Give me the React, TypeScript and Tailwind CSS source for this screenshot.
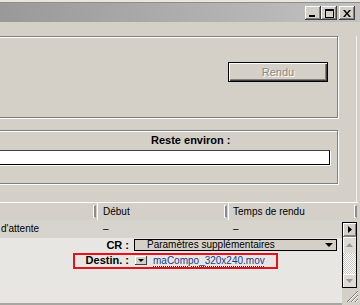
import type { ReactNode } from 'react';

function TitleButton({ children }: { children: ReactNode }) {
  return (
    <div className="flex h-[14px] w-[16px] items-center justify-center bg-[#d4d0c8] shadow-[inset_-1px_-1px_#404040,inset_1px_1px_#ffffff,inset_-2px_-2px_#808080]">
      {children}
    </div>
  );
}

function HeaderCell({ label, className }: { label: string; className: string }) {
  return (
    <div className={`flex h-full items-center border-t border-t-[#ffffff] bg-[#d4d0c8] ${className}`}>
      <span className="flex-1 truncate">{label}</span>
      {/* little ] grip at the end of each column */}
      <span className="mr-[1px] h-[13px] w-[3px] border-y border-r-2 border-l border-y-[#ffffff] border-r-[#8c8c8c] border-l-[#ffffff]" />
    </div>
  );
}

export default function App() {
  return (
    <div className="relative flex h-[305px] w-[360px] flex-col overflow-hidden bg-[#d4d0c8] font-['Liberation_Sans',Arial,sans-serif] text-[10px] leading-none text-black">
      <div className="h-[2px] bg-[#e8e5de]" />
      <div className="h-px bg-[#8e8e8e]" />

      {/* title bar */}
      <div className="flex h-[19px] items-start justify-end bg-linear-to-r from-[#999999] to-[#c2c2c2] pr-[5px] pt-[3px]">
        <TitleButton>
          <span className="mt-[6px] mr-[3px] h-[2px] w-[6px] bg-black" />
        </TitleButton>
        <TitleButton>
          <span className="h-[9px] w-[9px] border border-t-2 border-black" />
        </TitleButton>
        <div className="w-[2px]" />
        <TitleButton>
          <svg width="8" height="7" viewBox="0 0 8 7" className="mr-[1px]">
            <path d="M0 0h2l2 2.5L6 0h2L5 3.5 8 7H6L4 4.5 2 7H0l3-3.5z" fill="#000" />
          </svg>
        </TitleButton>
      </div>

      <div className="mt-[14px] flex w-[357px] shrink-0 flex-col border-r border-r-[#f4f2ee] pb-[18px]">
        {/* render group */}
        <div className="ml-[-4px] flex h-[82px] w-[342px] shrink-0 justify-end border border-[#808080] pt-[25px] pr-[9px] shadow-[inset_1px_1px_#ffffff,1px_1px_#ffffff]">
          <div className="flex h-[20px] w-[100px] items-center justify-center border border-black bg-[#d4d0c8] text-[11px] text-[#8a8a8a] shadow-[inset_1px_1px_#ffffff,inset_-1px_-1px_#404040,inset_-2px_-2px_#808080] [text-shadow:1px_1px_0_#ffffff]">
            Rendu
          </div>
        </div>

        {/* progress group */}
        <div className="mt-[12px] ml-[-4px] flex h-[54px] w-[342px] shrink-0 flex-col border border-[#808080] pt-[3px] shadow-[inset_1px_1px_#ffffff,1px_1px_#ffffff]">
          <div className="h-[13px] pl-[154px] text-[11px] leading-[13px] font-bold">Reste environ :</div>
          <div className="mt-[3px] h-[15px] w-[333px] border border-black border-t-[#404040] bg-white shadow-[1px_1px_0_#ffffff]" />
        </div>
      </div>

      {/* queue table */}
      <div className="flex h-[18px] shrink-0">
        <HeaderCell label="" className="w-[97px]" />
        <HeaderCell label="Début" className="w-[131px] border-l border-l-[#ffffff] pl-[5px]" />
        <HeaderCell label="Temps de rendu" className="w-[130px] border-l border-l-[#ffffff] pl-[4px]" />
      </div>

      <div className="flex flex-1">
        <div className="flex flex-1 flex-col bg-[#e8e6e2]">
          <div className="flex h-[18px] items-center bg-[#d7d4cd]">
            <span className="w-[103px] pl-px">d'attente</span>
            <span className="w-[130px]">–</span>
            <span>–</span>
          </div>
          <div className="flex h-[14px] items-start pt-px">
            <span className="w-[129px] text-right text-[11px] leading-[12px] font-bold">CR :</span>
            <div className="ml-[5px] flex h-[12px] w-[203px] items-center border border-black bg-[#d4d0c8] pl-[12px] pr-[3px]">
              <span className="flex-1">Paramètres supplémentaires</span>
              <svg width="8" height="4" viewBox="0 0 8 4">
                <path d="M0 0h8L4 4z" fill="#000" />
              </svg>
            </div>
          </div>
          <div className="flex h-[17px] items-center">
            <div className="ml-[73px] flex h-[16px] w-[205px] items-center border-2 border-[#e5121e]">
              <span className="w-[54px] text-right text-[11px] font-bold">Destin. :</span>
              <div className="ml-[6px] flex h-[9px] w-[12px] items-center justify-center bg-[#d4d0c8] shadow-[inset_-1px_-1px_#404040,inset_1px_1px_#ffffff]">
                <svg width="6" height="3" viewBox="0 0 6 3">
                  <path d="M0 0h6L3 3z" fill="#000" />
                </svg>
              </div>
              <span className="ml-[6px] text-[#1b3a8e] underline decoration-dotted decoration-[#1b3a8e] underline-offset-2">
                maCompo_320x240.mov
              </span>
            </div>
          </div>
          <div className="flex-1" />
          <div className="h-[2px] bg-[#a9a6a0]" />
        </div>

        <div className="mr-px flex w-[17px] flex-col items-start">
          <div className="mt-[2px] flex w-[15px] flex-col border border-black">
            <div className="flex h-[13px] items-center justify-center bg-[#d4d0c8] shadow-[inset_1px_1px_#ffffff,inset_-1px_-1px_#808080]">
              <svg width="4" height="7" viewBox="0 0 4 7">
                <path d="M0 0v7l4-3.5z" fill="#000" />
              </svg>
            </div>
            <div className="flex h-[17px] items-center justify-center border-t border-[#808080] bg-[#dedbd5] shadow-[inset_1px_1px_#ffffff]">
              <svg width="7" height="4" viewBox="0 0 7 4">
                <path d="M0 4h7L3.5 0z" fill="#9a9a9a" />
              </svg>
            </div>
            <div className="h-[21px] bg-[image:repeating-conic-gradient(#ffffff_0_25%,#cfccc5_0_50%)] bg-[length:2px_2px]" />
            <div className="flex h-[13px] items-center justify-center bg-[#dedbd5] shadow-[inset_1px_1px_#ffffff]">
              <svg width="7" height="4" viewBox="0 0 7 4">
                <path d="M0 0h7L3.5 4z" fill="#9a9a9a" />
              </svg>
            </div>
          </div>
          <svg width="14" height="14" viewBox="0 0 14 14" className="mt-[1px] ml-[3px]">
            <path d="M13 2L2 13M13 6L6 13M13 10L10 13" stroke="#808080" strokeWidth="1" />
            <path d="M13 3L3 13M13 7L7 13M13 11L11 13" stroke="#ffffff" strokeWidth="1" />
          </svg>
        </div>
      </div>
    </div>
  );
}
